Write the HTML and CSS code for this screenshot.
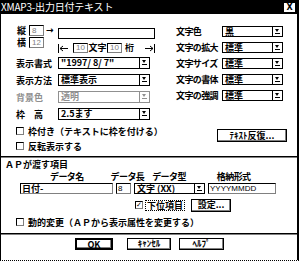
FILE: index.html
```html
<!DOCTYPE html>
<html>
<head>
    <title>XMAP3-出力日付テキスト</title>
    <link rel="stylesheet" href="styles.css">
</head>
<body>
    <div class="dialog">
        <div class="titlebar">
            <span class="title">XMAP3-出力日付テキスト</span>
            <span class="close">X</span>
        </div>

        <div class="upper">
            <div class="col-left">
                <div class="pos">
                    <div class="pos-grid">
                        <span class="lbl">縦</span><span class="num">8</span><span class="arrow">→</span>
                        <span class="lbl">横</span><span class="num">12</span><span></span>
                    </div>
                    <div class="pos-main">
                        <div class="textbox"></div>
                        <div class="range">
                            <svg class="arrow-l" width="15" height="9" viewBox="0 0 15 9"><path d="M0.5 0V9M2 4.5H10M2 4.5L5 2M2 4.5L5 7" stroke="#000" fill="none"/></svg>
                            <span class="num">10</span>
                            <span class="unit">文字</span>
                            <span class="num">10</span>
                            <span class="unit unit-keta">桁</span>
                            <svg class="arrow-r" width="12" height="9" viewBox="0 0 12 9"><path d="M11.5 0V9M2 4.5H10M10 4.5L7 2M10 4.5L7 7" stroke="#000" fill="none"/></svg>
                        </div>
                    </div>
                </div>

                <div class="field">
                    <span class="flabel">表示書式</span>
                    <div class="combo combo-wide"><span class="value">"1997/ 8/ 7"</span><span class="drop"></span></div>
                </div>
                <div class="field">
                    <span class="flabel">表示方法</span>
                    <div class="combo combo-wide"><span class="value">標準表示</span><span class="drop"></span></div>
                </div>
                <div class="field disabled">
                    <span class="flabel">背景色</span>
                    <div class="combo combo-wide"><span class="value">透明</span><span class="drop"></span></div>
                </div>
                <div class="field">
                    <span class="flabel">枠　高</span>
                    <div class="combo combo-wide"><span class="value">2.5ます</span><span class="drop"></span></div>
                </div>

                <div class="check"><span class="box"></span>枠付き（テキストに枠を付ける）</div>
                <div class="check"><span class="box"></span>反転表示する</div>
            </div>

            <div class="col-right">
                <div class="field">
                    <span class="rlabel">文字色</span>
                    <div class="combo combo-narrow"><span class="value">黒</span><span class="drop"></span></div>
                </div>
                <div class="field">
                    <span class="rlabel">文字の拡大</span>
                    <div class="combo combo-narrow"><span class="value">標準</span><span class="drop"></span></div>
                </div>
                <div class="field">
                    <span class="rlabel">文字サイズ</span>
                    <div class="combo combo-narrow"><span class="value">標準</span><span class="drop"></span></div>
                </div>
                <div class="field">
                    <span class="rlabel">文字の書体</span>
                    <div class="combo combo-narrow"><span class="value">標準</span><span class="drop"></span></div>
                </div>
                <div class="field">
                    <span class="rlabel">文字の強調</span>
                    <div class="combo combo-narrow"><span class="value">標準</span><span class="drop"></span></div>
                </div>
                <button class="btn btn-repeat">ﾃｷｽﾄ反復...</button>
            </div>
        </div>

        <div class="sep"></div>

        <div class="ap">
            <div class="ap-title">ＡＰが渡す項目</div>
            <div class="ap-head">
                <span class="h-name">データ名</span>
                <span class="h-len">データ長</span>
                <span class="h-type">データ型</span>
                <span class="h-fmt">格納形式</span>
            </div>
            <div class="ap-row">
                <div class="edit edit-name">日付-</div>
                <div class="edit edit-len">8</div>
                <div class="combo combo-type"><span class="value">文字 (XX)</span><span class="drop"></span></div>
                <div class="edit edit-fmt">YYYYMMDD</div>
            </div>
            <div class="ap-sub">
                <div class="check check-sub"><span class="box checked">✓</span><span class="focus">下位項目</span></div>
                <button class="btn btn-set">設定...</button>
            </div>
            <div class="check check-dyn"><span class="box"></span>動的変更（ＡＰから表示属性を変更する）</div>
        </div>

        <div class="sep"></div>

        <div class="footer">
            <button class="btn btn-ok">OK</button>
            <button class="btn btn-cancel">ｷｬﾝｾﾙ</button>
            <button class="btn btn-help">ﾍﾙﾌﾟ</button>
        </div>
    </div>
</body>
</html>
```

FILE: styles.css
```css
* {
    box-sizing: border-box;
}

body {
    margin: 0;
    font-family: "Noto Sans CJK JP", sans-serif;
    font-size: 9px;
    font-weight: bold;
    color: #000;
    background-color: #fff;
}

.dialog {
    width: 299px;
    height: 261px;
    border-left: 1px solid #000;
    border-right: 2px solid #000;
    border-bottom: 1px dotted #000;
    display: flex;
    flex-direction: column;
}

.titlebar {
    height: 14px;
    background-color: #000;
    color: #fff;
    display: flex;
    align-items: center;
    justify-content: space-between;
    padding: 0 1px 0 0;
    line-height: 14px;
}

.title {
    font-size: 10px;
    font-weight: normal;
    letter-spacing: -0.2px;
}

.close {
    width: 13px;
    height: 11px;
    background-color: #fff;
    color: #000;
    border: 1px solid #000;
    font-family: "DejaVu Sans", sans-serif;
    font-size: 8px;
    font-weight: bold;
    line-height: 9px;
    text-align: center;
}

/* upper half: position, format and text attributes */
.upper {
    display: flex;
    height: 142px;
    padding-top: 11px;
}

.col-left {
    width: 164px;
    padding-left: 15px;
    display: flex;
    flex-direction: column;
}

.col-right {
    flex: 1;
    padding-left: 11px;
    padding-top: 1px;
    display: flex;
    flex-direction: column;
    gap: 5px;
}

.pos {
    display: flex;
    height: 29px;
}

.pos-grid {
    display: grid;
    grid-template-columns: 13px 15px 14px;
    grid-template-rows: 11px 11px;
    row-gap: 1px;
    align-items: center;
}

.lbl {
    line-height: 11px;
    padding-left: 1px;
}

.num {
    height: 11px;
    border: 1px solid #000;
    border-right-color: #808080;
    border-bottom-color: #808080;
    color: #808080;
    font-family: "Liberation Sans", sans-serif;
    font-size: 8px;
    font-weight: normal;
    line-height: 9px;
    padding-left: 2px;
}

.pos-grid .num {
    width: 15px;
}

.arrow {
    font-family: "DejaVu Sans", sans-serif;
    font-size: 9px;
    line-height: 11px;
    padding-left: 2px;
}

.pos-main {
    width: 97px;
}

.textbox {
    margin-top: 3px;
    height: 11px;
    border: 1px solid #000;
}

.range {
    display: flex;
    align-items: center;
    margin-top: 4px;
    height: 10px;
}

.range .num {
    width: 15px;
    height: 10px;
    line-height: 8px;
}

.arrow-l,
.arrow-r {
    display: block;
    flex-shrink: 0;
}

.arrow-r {
    margin-left: auto;
}

.unit {
    width: 19px;
    text-align: center;
    line-height: 10px;
}

.unit-keta {
    width: 12px;
    padding-left: 3px;
    text-align: left;
}

.field {
    display: flex;
    align-items: center;
    height: 12px;
}

.col-left .field {
    margin-top: 5px;
}

.col-left .pos + .field {
    margin-top: 3px;
}

.col-right .field {
    height: 11px;
}

.flabel {
    width: 42px;
    white-space: nowrap;
}

.rlabel {
    width: 46px;
    white-space: nowrap;
    letter-spacing: -0.6px;
}

.disabled .flabel,
.disabled .value {
    color: #909090;
}

.disabled .combo {
    border-color: #909090;
}

.combo {
    display: flex;
    height: 100%;
    border: 1px solid #000;
    background-color: #fff;
}

.combo-wide {
    width: 92px;
}

.combo-narrow {
    width: 61px;
}

.combo .value {
    flex: 1;
    padding-left: 2px;
    line-height: 9px;
    white-space: nowrap;
}

.drop {
    width: 10px;
    border-left: 1px solid #000;
    background: linear-gradient(#000, #000) 2px 6px / 5px 1px no-repeat;
    position: relative;
}

.drop::before {
    content: "";
    position: absolute;
    left: 2px;
    top: 2px;
    border-left: 2.5px solid transparent;
    border-right: 2.5px solid transparent;
    border-top: 3px solid #000;
}

.disabled .drop {
    border-left-color: #909090;
    background-image: linear-gradient(#909090, #909090);
}

.disabled .drop::before {
    border-top-color: #909090;
}

.check {
    display: flex;
    align-items: center;
    height: 10px;
    white-space: nowrap;
}

.col-left .check {
    margin-top: 5px;
}

.col-left .field + .check {
    margin-top: 6px;
}

.box {
    width: 8px;
    height: 8px;
    border: 1px solid #000;
    border-right-color: #808080;
    border-bottom-color: #808080;
    margin-right: 4px;
    flex-shrink: 0;
}

.box.checked {
    font-family: "DejaVu Sans", sans-serif;
    font-size: 7px;
    font-weight: bold;
    line-height: 6px;
    text-align: center;
}

.btn {
    font-family: "Noto Sans CJK JP", sans-serif;
    font-size: 9px;
    font-weight: bold;
    background-color: #fff;
    color: #000;
    border: 1px solid #000;
    box-shadow: inset -1px -1px #808080;
    padding: 0;
    line-height: 10px;
}

.btn-repeat {
    width: 70px;
    height: 13px;
    margin-top: 23px;
    margin-left: 41px;
}

.sep {
    height: 2px;
    border-top: 1px solid #000;
    border-bottom: 1px solid #808080;
}

/* lower half: item passed from the AP */
.ap {
    height: 75px;
    padding-left: 4px;
}

.ap-title {
    height: 13px;
    line-height: 13px;
}

.ap-head {
    display: flex;
    align-items: center;
    height: 11px;
    line-height: 9px;
    letter-spacing: -0.6px;
}

.h-name {
    margin-left: 45px;
}

.h-len {
    margin-left: 27px;
}

.h-type {
    margin-left: 8px;
}

.h-fmt {
    margin-left: 31px;
}

.ap-row {
    display: flex;
    height: 11px;
    margin-top: 1px;
    padding-left: 15px;
    gap: 3px;
}

.edit {
    height: 11px;
    border: 1px solid #000;
    border-right-color: #808080;
    border-bottom-color: #808080;
    font-family: "Liberation Sans", sans-serif;
    font-size: 8px;
    font-weight: normal;
    line-height: 9px;
    padding-left: 1px;
}

.edit-name {
    width: 93px;
    font-family: "Noto Sans CJK JP", sans-serif;
    font-size: 9px;
    font-weight: bold;
}

.edit-len {
    width: 15px;
}

.combo-type {
    width: 71px;
}

.edit-fmt {
    width: 68px;
}

.ap-sub {
    display: flex;
    align-items: center;
    height: 14px;
    margin-top: 4px;
    padding-left: 130px;
}

.check-sub .box {
    margin-right: 2px;
}

.focus {
    border: 1px dotted #000;
    padding: 0 1px;
    line-height: 9px;
}

.btn-set {
    width: 40px;
    height: 13px;
    margin-left: 6px;
}

.check-dyn {
    margin-top: 5px;
    padding-left: 11px;
}

.footer {
    flex: 1;
    display: flex;
    align-items: flex-start;
    padding-top: 3px;
    padding-left: 74px;
}

.footer .btn {
    height: 12px;
}

.btn-ok {
    width: 38px;
    border-width: 2px;
}

.btn-cancel {
    width: 44px;
    margin-left: 14px;
}

.btn-help {
    width: 45px;
    margin-left: 8px;
}
```
